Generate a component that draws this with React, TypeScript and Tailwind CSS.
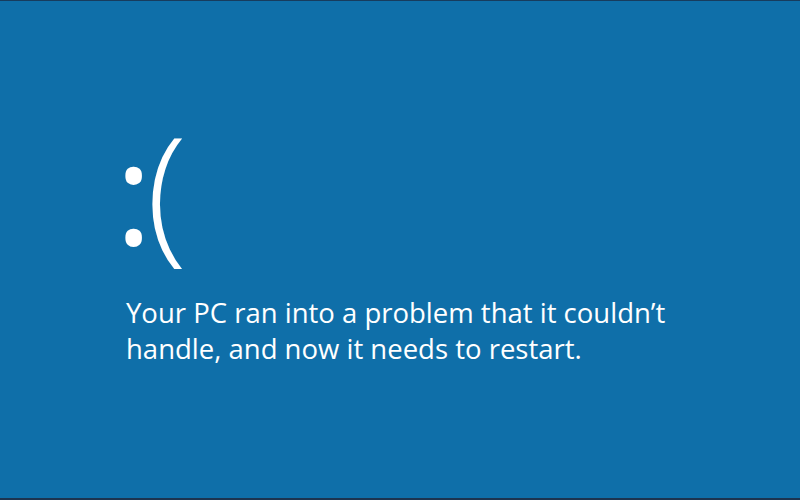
export default function App() {
  return (
    <div className="w-[800px] h-[500px] bg-[#0f6fa9] border-t border-t-[#173c5e] border-b-2 border-b-[#1c3450] overflow-hidden">
      <div className="pl-[115px] pt-[111px] text-white font-['Open_Sans',sans-serif]">
        <div className="flex items-baseline h-[183px] leading-none">
          <span className="text-[142px] font-normal tracking-[-6px]">:</span>
          <span className="text-[150px] font-light">(</span>
        </div>
        <p className="text-[27.5px] leading-[36px] pl-[11px] w-[700px]">
          Your PC ran into a problem that it couldn’t
          <br />
          handle, and now it needs to restart.
        </p>
      </div>
    </div>
  );
}
